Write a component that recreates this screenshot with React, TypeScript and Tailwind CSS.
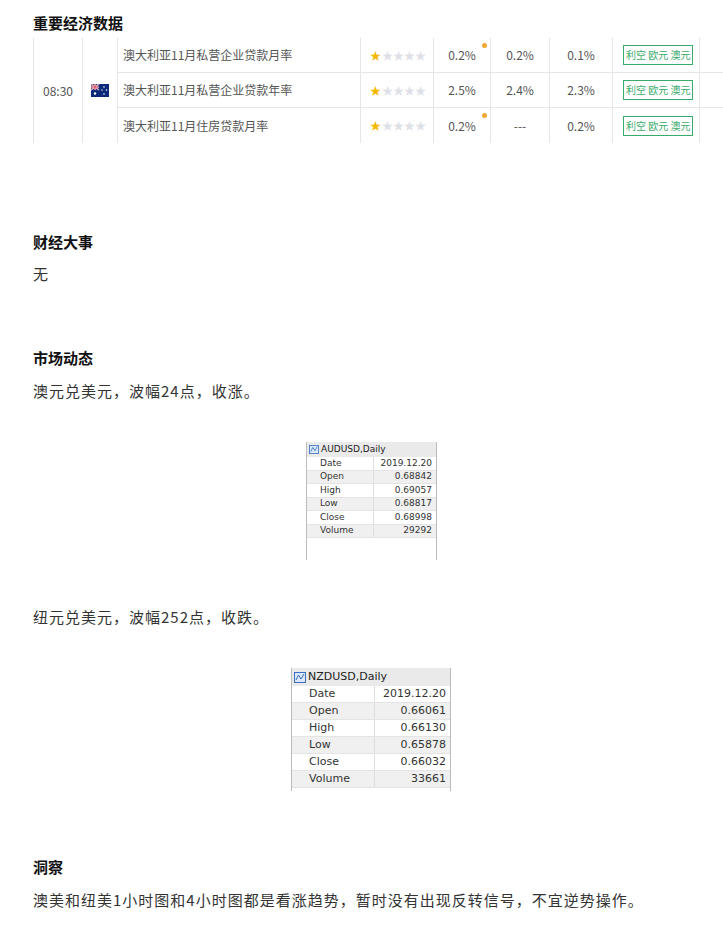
const F = { fontFamily: '"Noto Sans CJK SC", "Noto Sans", sans-serif' };

const rows = [
  { name: "澳大利亚11月私营企业贷款月率", prev: "0.2%", fc: "0.2%", act: "0.1%", dot: true },
  { name: "澳大利亚11月私营企业贷款年率", prev: "2.5%", fc: "2.4%", act: "2.3%", dot: false },
  { name: "澳大利亚11月住房贷款月率", prev: "0.2%", fc: "---", act: "0.2%", dot: true },
];

const Stars = () => (
  <div className="flex gap-[1px] text-[11px] leading-none">
    <span className="text-[#f5b800]">★</span>
    <span className="text-[#dde0e6]">★★★★</span>
  </div>
);

const Flag = () => (
  <svg width="18" height="13" viewBox="0 0 18 13">
    <rect width="18" height="13" fill="#0b2a7a" />
    <path d="M0 0L8 6M8 0L0 6" stroke="#fff" strokeWidth="1.5" />
    <path d="M0 0L8 6M8 0L0 6" stroke="#c8102e" strokeWidth="0.6" />
    <path d="M4 0V6M0 3H8" stroke="#fff" strokeWidth="1.6" />
    <path d="M4 0V6M0 3H8" stroke="#c8102e" strokeWidth="0.8" />
    <circle cx="4" cy="9.5" r="1.2" fill="#fff" />
    <circle cx="13" cy="3" r="0.8" fill="#fff" />
    <circle cx="15.5" cy="6" r="0.8" fill="#fff" />
    <circle cx="13" cy="10" r="0.8" fill="#fff" />
    <circle cx="11" cy="6" r="0.7" fill="#fff" />
  </svg>
);

const Chart = ({ title, data, big }: { title: string; data: [string, string][]; big?: boolean }) => (
  <div
    className={`${big ? "w-[160px] text-[11px]" : "w-[131px] text-[9px]"} border-l border-r border-[#bbb] bg-white`}
    style={{ fontFamily: '"DejaVu Sans", sans-serif' }}
  >
    <div className={`flex items-center gap-[2px] bg-[#eaeaea] ${big ? "h-[18px]" : "h-[15px]"} pl-[2px] text-[#222]`}>
      <svg width={big ? 12 : 10} height={big ? 11 : 9} viewBox="0 0 12 11">
        <rect x="0.5" y="0.5" width="11" height="10" fill="#dbe8fa" stroke="#3a6fc4" />
        <path d="M2 8L4.5 3L7 7L10 2" fill="none" stroke="#3a6fc4" />
      </svg>
      {title}
    </div>
    {data.map(([k, v], i) => (
      <div
        key={k}
        className={`flex ${big ? "h-[17px]" : "h-[13.5px]"} items-center text-[#333] ${i % 2 ? "bg-[#f0f0f0]" : "bg-white"} border-b border-[#e4e4e4]`}
      >
        <span className={`${big ? "w-[83px] pl-[17px]" : "w-[67px] pl-[13px]"} border-r border-[#ddd] h-full flex items-center`}>{k}</span>
        <span className="flex-1 text-right pr-[4px]">{v}</span>
      </div>
    ))}
    <div className={big ? "h-[3px]" : "h-[22px]"} />
  </div>
);

export default function App() {
  return (
    <div className="w-[723px] h-[933px] bg-white overflow-hidden text-[#333]" style={F}>
      <div className="pl-[33px] pt-[12px]">
        <h2 className="text-[15px] font-bold text-[#111] leading-[22px]">重要经济数据</h2>
        <div className="mt-[4px] flex text-[12px] text-[#555] w-[700px]">
          <div className="w-[50px] border-l border-r border-[#e6e6e6] flex items-center justify-center">08:30</div>
          <div className="w-[35px] border-r border-[#e6e6e6] flex items-center justify-center"><Flag /></div>
          <div className="flex-1">
            {rows.map((r, i) => (
              <div key={i} className={`flex h-[35px] items-center ${i < 2 ? "border-b" : ""} border-[#e6e6e6]`}>
                <div className="w-[243px] pl-[5px] border-r border-[#e6e6e6] h-full flex items-center">{r.name}</div>
                <div className="w-[73px] pl-[9px] border-r border-[#e6e6e6] h-full flex items-center"><Stars /></div>
                <div className="relative w-[57px] border-r border-[#e6e6e6] h-full flex items-center justify-center">
                  {r.prev}
                  {r.dot && <span className="absolute right-[3px] top-[5px] w-[5px] h-[5px] rounded-full bg-[#f0a830]" />}
                </div>
                <div className="w-[59px] border-r border-[#e6e6e6] h-full flex items-center justify-center">{r.fc}</div>
                <div className="w-[63px] border-r border-[#e6e6e6] h-full flex items-center justify-center">{r.act}</div>
                <div className="w-[87px] border-r border-[#e6e6e6] h-full flex items-center pl-[10px]">
                  <span className="border border-[#3bab6b] text-[#3bab6b] text-[10px] px-[2px] py-[2px] leading-[14px]">利空 欧元 澳元</span>
                </div>
                <div className="flex-1" />
              </div>
            ))}
          </div>
        </div>

        <h2 className="mt-[88px] text-[15px] font-bold text-[#111] leading-[22px]">财经大事</h2>
        <p className="mt-[10px] text-[15px] tracking-[1px] leading-[22px]">无</p>

        <h2 className="mt-[62px] text-[15px] font-bold text-[#111] leading-[22px]">市场动态</h2>
        <p className="mt-[11px] text-[15px] tracking-[1px] leading-[22px]">澳元兑美元，波幅24点，收涨。</p>
        <div className="mt-[40px] flex pl-[273px]">
          <Chart title="AUDUSD,Daily" data={[["Date", "2019.12.20"], ["Open", "0.68842"], ["High", "0.69057"], ["Low", "0.68817"], ["Close", "0.68998"], ["Volume", "29292"]]} />
        </div>
        <p className="mt-[46px] text-[15px] tracking-[1px] leading-[22px]">纽元兑美元，波幅252点，收跌。</p>
        <div className="mt-[40px] flex pl-[258px]">
          <Chart big title="NZDUSD,Daily" data={[["Date", "2019.12.20"], ["Open", "0.66061"], ["High", "0.66130"], ["Low", "0.65878"], ["Close", "0.66032"], ["Volume", "33661"]]} />
        </div>

        <h2 className="mt-[65px] text-[15px] font-bold text-[#111] leading-[22px]">洞察</h2>
        <p className="mt-[11px] text-[15px] tracking-[1px] leading-[22px]">澳美和纽美1小时图和4小时图都是看涨趋势，暂时没有出现反转信号，不宜逆势操作。</p>
      </div>
    </div>
  );
}
